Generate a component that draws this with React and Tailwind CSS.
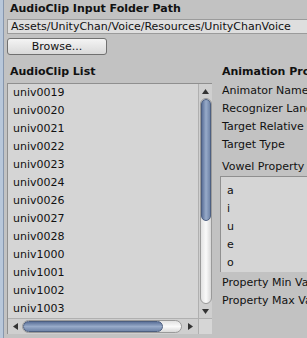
import React from "react";

const items = ["univ0019","univ0020","univ0021","univ0022","univ0023","univ0024","univ0026","univ0027","univ0028","univ1000","univ1001","univ1002","univ1003"];
const vowels = ["a","i","u","e","o"];

function VScroll() {
  return (
    <div className="w-[14px] flex flex-col items-center bg-[#cfcfcf] border-l border-[#b0b0b0]">
      <div className="h-[14px] flex items-center justify-center">
        <svg width="7" height="5" viewBox="0 0 7 5"><path d="M3.5 0 L7 5 L0 5 Z" fill="#333" /></svg>
      </div>
      <div className="w-[12px] flex-1 flex flex-col rounded-full bg-gradient-to-r from-[#e2e2e2] via-[#fafafa] to-[#d8d8d8] border border-[#9a9a9a]">
        <div className="h-[122px] rounded-full bg-gradient-to-r from-[#5d729a] via-[#98abc9] to-[#6f84a8] border border-[#4d5f80]" />
      </div>
      <div className="h-[14px] flex items-center justify-center">
        <svg width="7" height="5" viewBox="0 0 7 5"><path d="M0 0 L7 0 L3.5 5 Z" fill="#333" /></svg>
      </div>
    </div>
  );
}

function HScroll() {
  return (
    <div className="h-[16px] flex border-t border-[#b0b0b0] bg-[#cfcfcf]">
      <div className="flex-1 flex items-center">
        <div className="w-[14px] flex items-center justify-center">
          <svg width="5" height="7" viewBox="0 0 5 7"><path d="M0 3.5 L5 0 L5 7 Z" fill="#333" /></svg>
        </div>
        <div className="flex-1 h-[13px] flex rounded-full bg-gradient-to-b from-[#e2e2e2] via-[#fafafa] to-[#d8d8d8] border border-[#9a9a9a]">
          <div className="w-[140px] rounded-full bg-gradient-to-b from-[#5d729a] via-[#98abc9] to-[#6f84a8] border border-[#4d5f80]" />
        </div>
        <div className="w-[16px] flex items-center justify-center">
          <svg width="5" height="7" viewBox="0 0 5 7"><path d="M0 0 L5 3.5 L0 7 Z" fill="#333" /></svg>
        </div>
      </div>
      <div className="w-[14px] bg-[#d6d6d6] border-l border-[#b0b0b0]" />
    </div>
  );
}

export default function App() {
  return (
    <div className="w-[307px] h-[338px] bg-[#c2c2c2] flex overflow-hidden text-[11px] leading-[18px] text-[#111]" style={{ fontFamily: '"DejaVu Sans", Verdana, sans-serif' }}>
      <div className="w-[4px] shrink-0 bg-[#b8c7da] border-r border-[#8797ae]" />
      <div className="flex-1 flex flex-col pl-[3px] min-w-0">
        <div className="h-[18px] pl-[3px] font-bold leading-[18px]">AudioClip Input Folder Path</div>
        <div className="h-[15px] mt-[1px] w-[320px] bg-[#dedede] border border-[#9b9b9b] pl-[3px] leading-[13px] whitespace-nowrap">Assets/UnityChan/Voice/Resources/UnityChanVoice</div>
        <div className="mt-[4px] w-[100px] h-[17px] rounded-[3px] border border-[#707070] bg-gradient-to-b from-[#f4f4f4] to-[#d9d9d9] flex items-center justify-center leading-[15px]">Browse...</div>
        <div className="flex mt-[7px] gap-[8px]">
          <div className="w-[205px] shrink-0 flex flex-col">
            <div className="h-[20px] pl-[3px] font-bold leading-[20px]">AudioClip List</div>
            <div className="h-[251px] mt-[1px] flex flex-col bg-[#d5d5d5] border-t border-l border-[#8f8f8f]">
              <div className="flex-1 flex min-h-0">
                <div className="flex-1 pl-[5px]">
                  {items.map((t) => (
                    <div key={t} className="h-[18px] leading-[18px]">{t}</div>
                  ))}
                </div>
                <VScroll />
              </div>
              <HScroll />
            </div>
          </div>
          <div className="flex-1 flex flex-col min-w-0 whitespace-nowrap">
            <div className="h-[20px] pl-[2px] font-bold leading-[20px]">Animation Properties</div>
            <div className="pl-[2px]">
              <div className="h-[18px]">Animator Name</div>
              <div className="h-[18px]">Recognizer Language</div>
              <div className="h-[18px]">Target Relative Path</div>
              <div className="h-[18px]">Target Type</div>
              <div className="h-[18px] mt-[4px]">Vowel Property Names</div>
            </div>
            <div className="h-[96px] bg-[#d5d5d5] border-t border-l border-[#8f8f8f] pl-[6px] pt-[5px]">
              {vowels.map((v) => (
                <div key={v} className="h-[18px]">{v}</div>
              ))}
            </div>
            <div className="pl-[2px] mt-[2px]">
              <div className="h-[18px]">Property Min Value</div>
              <div className="h-[18px]">Property Max Value</div>
            </div>
          </div>
        </div>
      </div>
    </div>
  );
}
